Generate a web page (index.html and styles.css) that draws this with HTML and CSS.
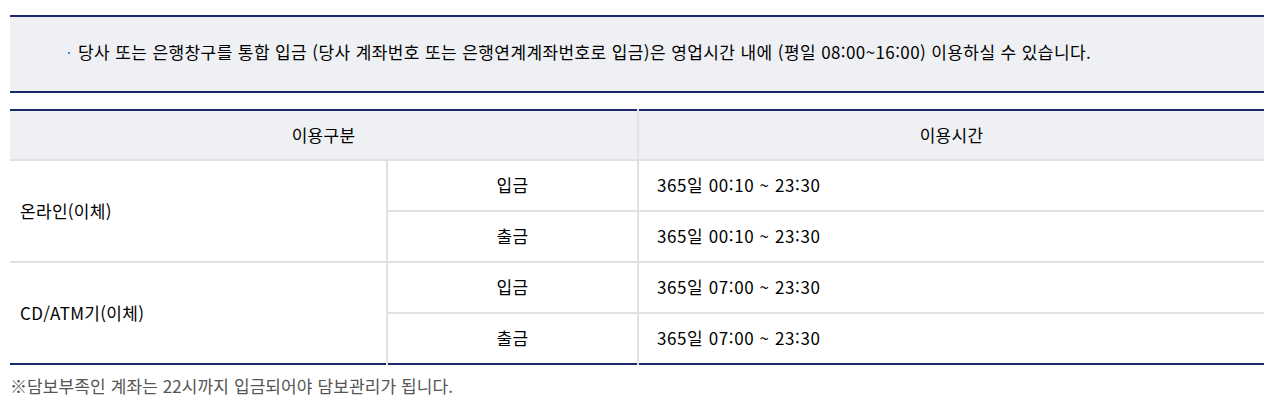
FILE: index.html
```html
<!DOCTYPE html>
<html lang="ko">
<head>
<meta charset="utf-8">
<link rel="stylesheet" href="styles.css">
</head>
<body>
<div class="wrap">
  <div class="notice">
    <p class="notice-item">당사 또는 은행창구를 통합 입금 (당사 계좌번호 또는 은행연계계좌번호로 입금)은 영업시간 내에 (평일 08:00~16:00) 이용하실 수 있습니다.</p>
  </div>
  <table class="tbl">
    <colgroup>
      <col class="c1">
      <col class="c2">
      <col class="c3">
    </colgroup>
    <thead>
      <tr>
        <th colspan="2">이용구분</th>
        <th>이용시간</th>
      </tr>
    </thead>
    <tbody>
      <tr>
        <td rowspan="2" class="left">온라인(이체)</td>
        <td class="center">입금</td>
        <td>365일 00:10 ~ 23:30</td>
      </tr>
      <tr>
        <td class="center">출금</td>
        <td>365일 00:10 ~ 23:30</td>
      </tr>
      <tr>
        <td rowspan="2" class="left">CD/ATM기(이체)</td>
        <td class="center">입금</td>
        <td>365일 07:00 ~ 23:30</td>
      </tr>
      <tr>
        <td class="center">출금</td>
        <td>365일 07:00 ~ 23:30</td>
      </tr>
    </tbody>
  </table>
  <p class="foot">※담보부족인 계좌는 22시까지 입금되어야 담보관리가 됩니다.</p>
</div>
</body>
</html>
```

FILE: styles.css
```css
html, body {
  margin: 0;
  padding: 0;
  background: #fff;
}
body {
  font-family: "Noto Sans CJK KR", "Noto Sans", sans-serif;
  color: #000;
  font-size: 17px;
}
.wrap {
  padding: 15px 20px 0 10px;
}
.notice {
  background: #eff0f3;
  border-top: 2px solid #1b2a6b;
  border-bottom: 2px solid #1b2a6b;
  height: 74px;
  box-sizing: content-box;
  display: flex;
  align-items: center;
  padding-left: 58px;
}
.notice-item {
  margin: 0 0 5px 0;
  position: relative;
  padding-left: 10px;
  font-size: 17px;
  line-height: 20px;
  letter-spacing: 0.4px;
}
.notice-item::before {
  content: "";
  position: absolute;
  left: 0;
  top: 10px;
  width: 2px;
  height: 2px;
  background: #3b8ee0;
}
.tbl {
  margin-top: 16px;
  width: 100%;
  border-collapse: collapse;
  border-top: 2px solid #1b2a6b;
  border-bottom: 2px solid #1b2a6b;
  table-layout: fixed;
}
.c1 { width: 377px; }
.c2 { width: 251px; }
.tbl th {
  background: #eff0f3;
  font-weight: normal;
  height: 46px;
  padding: 0 0 2px 0;
  border-left: 2px solid #e1e2e5;
  border-bottom: 2px solid #e1e1e1;
  text-align: center;
  font-size: 17px;
  letter-spacing: 0.3px;
}
.tbl th:first-child { border-left: none; }
.tbl td {
  height: 47px;
  padding: 0 0 2px 18px;
  border: 2px solid #e1e1e1;
  font-size: 17px;
  letter-spacing: 0.6px;
}
.tbl tr td:first-child.left {
  border-left: none;
  padding-left: 10px;
  letter-spacing: 0.3px;
}
.tbl td:last-child { border-right: none; }
.tbl tbody tr:last-child td,
.tbl tbody tr:nth-child(3) td.left { border-bottom: none; }
.tbl td.center {
  text-align: center;
  padding-left: 0;
  letter-spacing: 0.3px;
}
.foot {
  margin: 11px 0 0 0;
  color: #555;
  font-size: 17px;
  line-height: 20px;
  letter-spacing: 0.1px;
}
```
